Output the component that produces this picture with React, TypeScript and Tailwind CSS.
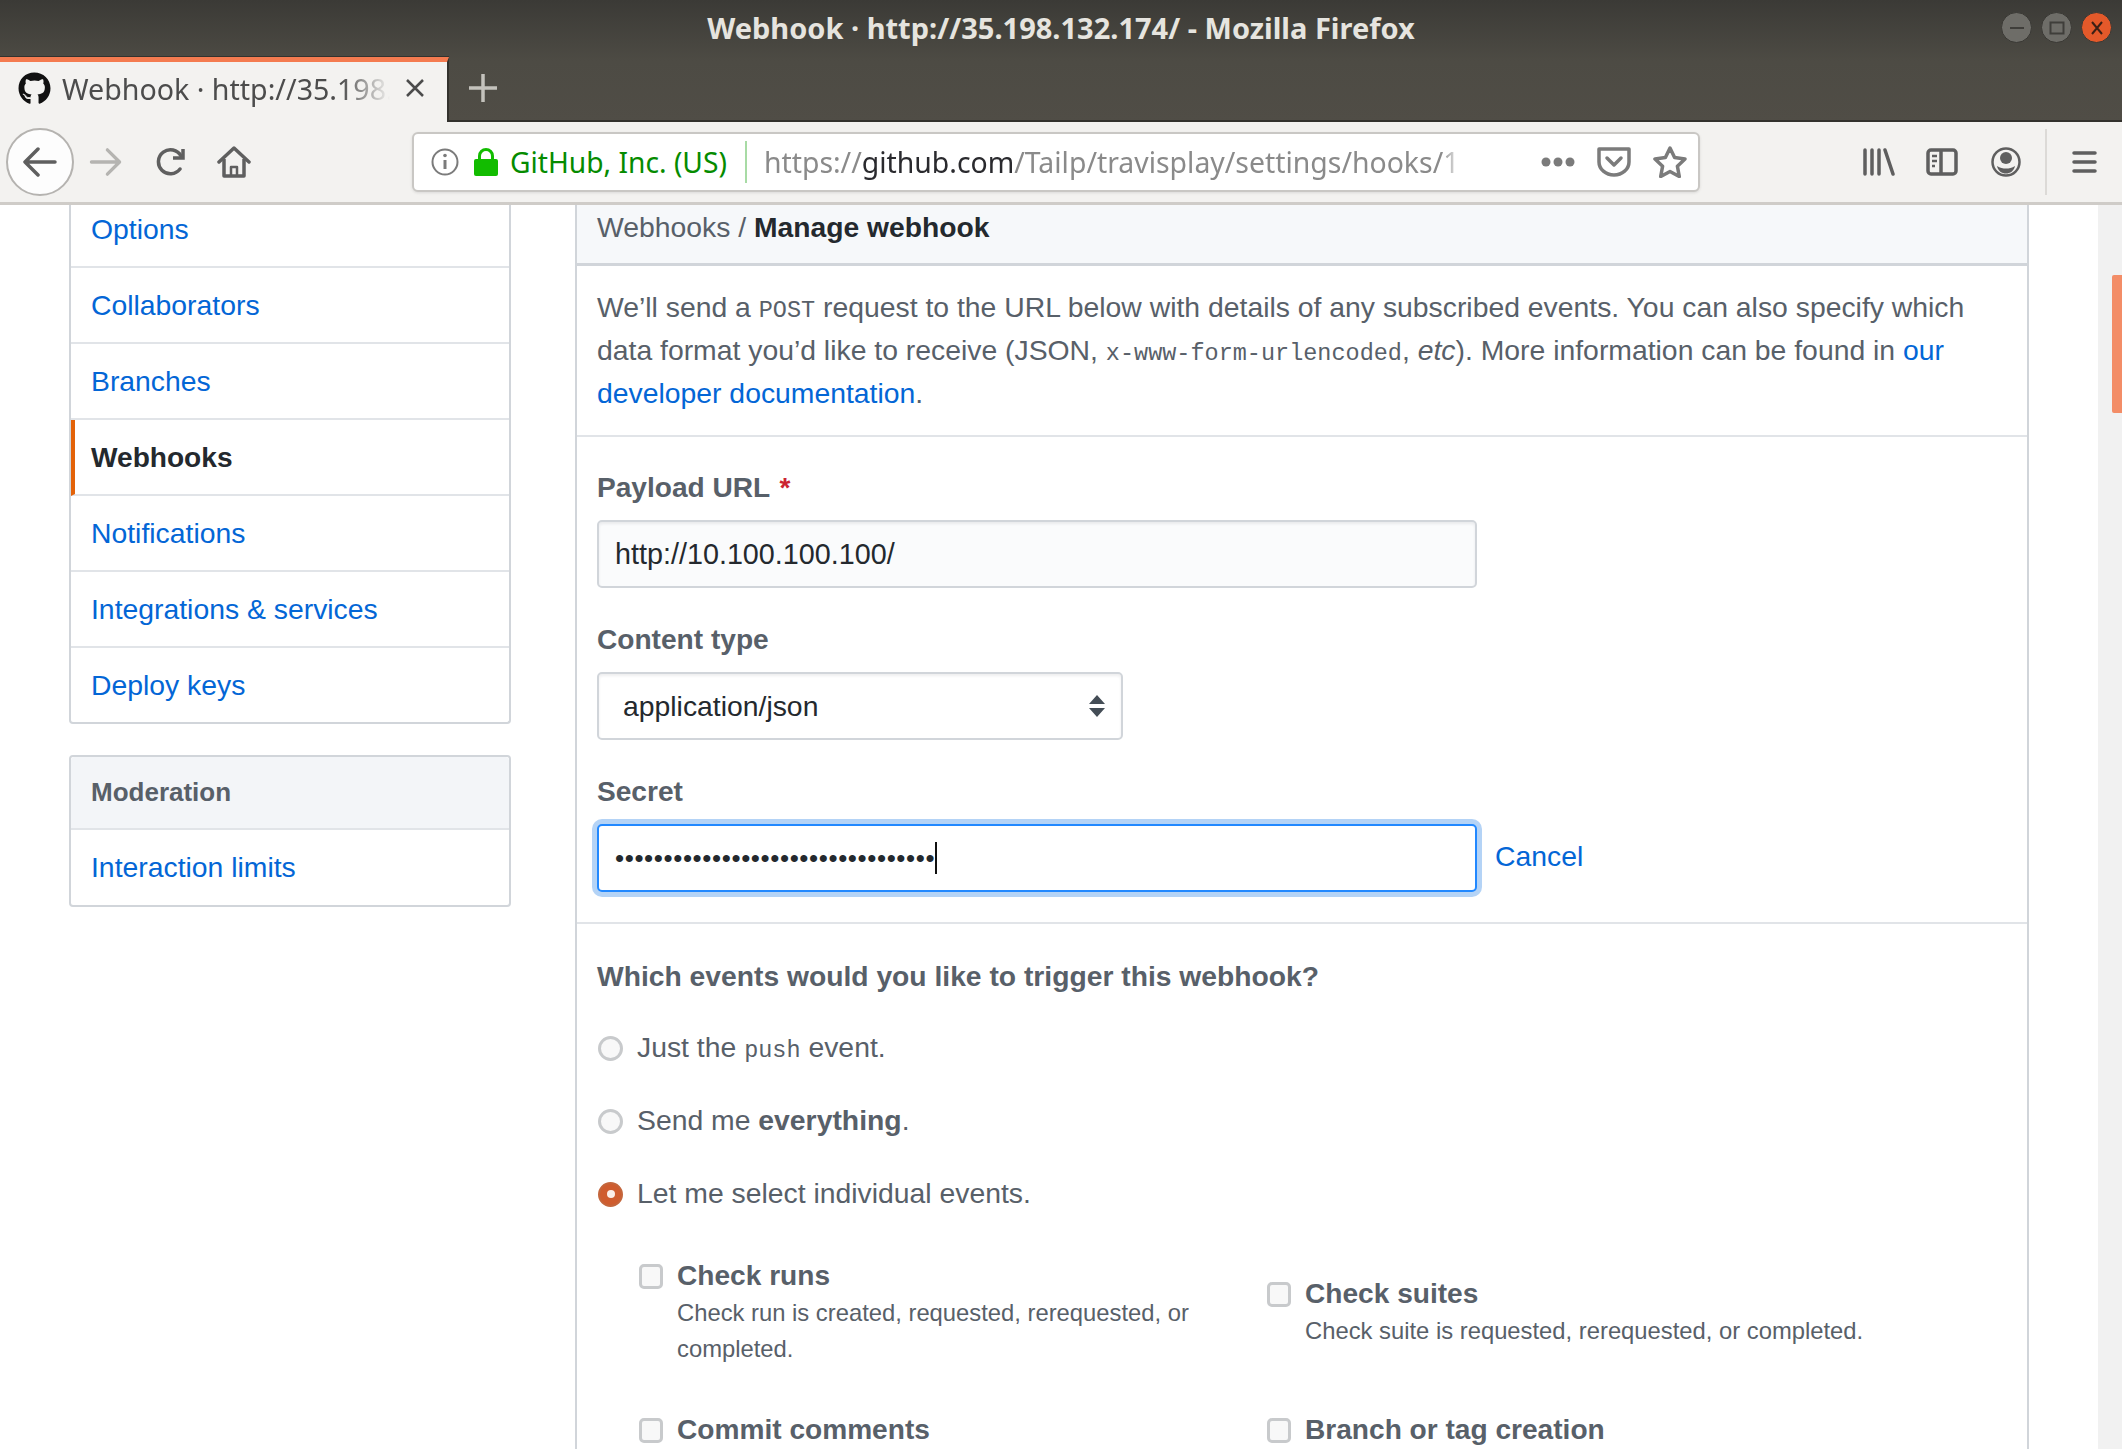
import { FaGithub } from 'react-icons/fa';

const sans = "font-['Liberation_Sans',Arial,sans-serif]";
const ubuntu = "font-['Noto_Sans','Open_Sans',sans-serif]";
const mono = "font-['Liberation_Mono',monospace] text-[23.5px] leading-none";

const menuItems = ['Collaborators', 'Branches', 'Webhooks', 'Notifications', 'Integrations & services', 'Deploy keys'];

function WindowButton({ kind }: { kind: 'min' | 'max' | 'close' }) {
  const bg = kind === 'close' ? 'bg-[#e4592a]' : 'bg-[#6e6d68]';
  return (
    <span className={`flex h-[31px] w-[31px] items-center justify-center rounded-full border border-[#3a3935] ${bg}`}>
      <svg width="16" height="16" viewBox="0 0 16 16" fill="none" stroke={kind === 'close' ? '#3c2015' : '#3f3e3a'} strokeWidth="2">
        {kind === 'min' && <path d="M1 8h14" />}
        {kind === 'max' && <rect x="1.5" y="2.5" width="13" height="11" />}
        {kind === 'close' && <path d="M3 2l10 12M13 2L3 14" />}
      </svg>
    </span>
  );
}

function TabBar() {
  return (
    <div className="bg-[linear-gradient(#3b3a36,#4d4b44_50%,#504d46)]">
      <div className={`relative flex h-[57px] items-center justify-center pb-[2px] ${ubuntu} text-[29px] font-bold text-[#e6e4df]`}>
        <span className="whitespace-nowrap text-center">Webhook · http://35.198.132.174/ - Mozilla Firefox</span>
        <div className="absolute right-[10px] top-[12px] flex gap-[9px]">
          <WindowButton kind="min" />
          <WindowButton kind="max" />
          <WindowButton kind="close" />
        </div>
      </div>
      <div className="flex h-[65px] items-stretch border-b-2 border-[#33322e]">
        <div className="-mb-[2px] flex w-[449px] items-center border-r-2 border-t-[5px] border-r-[#33322e] border-t-[#f47b50] bg-[#f3f2f0] pb-[8px] pl-[18px] shadow-[0_-1px_0_#33322e]">
          <FaGithub className="h-[33px] w-[33px] text-[#111]" />
          <span className={`ml-[11px] w-[328px] overflow-hidden whitespace-nowrap ${ubuntu} text-[28.6px] text-[#4c4c4c] [mask-image:linear-gradient(90deg,#000_85%,transparent)]`}>
            Webhook · http://35.198.132.174/
          </span>
          <svg className="ml-[15px]" width="20" height="20" viewBox="0 0 20 20" stroke="#4c4c4c" strokeWidth="2.5" fill="none">
            <path d="M2 2l16 16M18 2L2 18" />
          </svg>
        </div>
        <svg className="ml-[20px] mt-[16px]" width="28" height="30" viewBox="0 0 28 30" stroke="#c4c2bc" strokeWidth="3.5" fill="none">
          <path d="M14 1v28M0 15h28" />
        </svg>
      </div>
    </div>
  );
}

function Toolbar() {
  return (
    <div className="flex h-[83px] items-center border-b-[3px] border-[#cfccc8] bg-[#f3f2f0] pl-[6px]">
      <span className="flex h-[68px] w-[68px] items-center justify-center rounded-full border-2 border-[#b5b3b0] bg-[#fdfdfd]">
        <svg width="34" height="32" viewBox="0 0 34 32" fill="none" stroke="#5f5f5f" strokeWidth="3.5" strokeLinecap="round" strokeLinejoin="round">
          <path d="M32 16H3M15 3L2 16l13 13" />
        </svg>
      </span>
      <svg className="ml-[15px]" width="33" height="30" viewBox="0 0 34 32" fill="none" stroke="#b5b4b1" strokeWidth="3.5" strokeLinecap="round" strokeLinejoin="round">
        <path d="M2 16h29M19 3l13 13-13 13" />
      </svg>
      <svg className="ml-[33px]" width="32" height="30" viewBox="0 0 32 30" fill="none" stroke="#5f5f5f" strokeWidth="3.5" strokeLinecap="round" strokeLinejoin="round">
        <path d="M25 22a12 12 0 1 1 1-13" />
        <path d="M28 2v9h-10" strokeLinecap="butt" strokeLinejoin="miter" />
      </svg>
      <svg className="ml-[30px]" width="34" height="32" viewBox="0 0 34 32" fill="none" stroke="#5f5f5f" strokeWidth="3.5" strokeLinejoin="round">
        <path d="M2 16L17 2l15 14" strokeLinecap="round" />
        <path d="M7 13v17h20V13" />
        <path d="M14 30v-9h6v9" strokeWidth="2.5" />
      </svg>
      <div className="ml-[161px] flex h-[60px] w-[1288px] items-center rounded-[6px] border-2 border-[#c9c7c4] bg-white shadow-[0_1px_3px_rgba(0,0,0,0.1)]">
        <svg className="ml-[17px]" width="28" height="28" viewBox="0 0 28 28" fill="none" stroke="#7b7b7b" strokeWidth="2">
          <circle cx="14" cy="14" r="12.5" />
          <path d="M14 12v9" strokeWidth="3" />
          <circle cx="14" cy="7.5" r="1.8" fill="#7b7b7b" stroke="none" />
        </svg>
        <svg className="ml-[15px]" width="24" height="28" viewBox="0 0 24 28">
          <path d="M5.5 12V8a6.5 6.5 0 0 1 13 0v4" fill="none" stroke="#12bc00" strokeWidth="3" />
          <rect x="0" y="11" width="24" height="17" rx="2" fill="#12bc00" />
        </svg>
        <span className={`ml-[12px] whitespace-nowrap ${ubuntu} text-[28.2px] text-[#058b00]`}>GitHub, Inc. (US)</span>
        <span className="ml-[18px] h-[42px] w-[2px] bg-[#a8dba5]" />
        <span className={`ml-[17px] w-[698px] overflow-hidden whitespace-nowrap ${ubuntu} text-[28.4px] text-[#8a8a8a] [mask-image:linear-gradient(90deg,#000_97%,transparent)]`}>
          https://<span className="text-[#2a2a2e]">github.com</span>/Tailp/travisplay/settings/hooks/11111
        </span>
        <svg className="ml-[79px]" width="34" height="10" viewBox="0 0 34 10" fill="#7b7b7b">
          <circle cx="5" cy="5" r="4.5" />
          <circle cx="17" cy="5" r="4.5" />
          <circle cx="29" cy="5" r="4.5" />
        </svg>
        <svg className="ml-[22px]" width="34" height="30" viewBox="0 0 34 30" fill="none" stroke="#7b7b7b" strokeWidth="3.5" strokeLinecap="round" strokeLinejoin="round">
          <path d="M2 2h30v13a15 13 0 0 1-30 0z" />
          <path d="M10 11l7 7 7-7" />
        </svg>
        <svg className="ml-[22px]" width="34" height="32" viewBox="0 0 34 32" fill="none" stroke="#7b7b7b" strokeWidth="3.5" strokeLinejoin="round">
          <path d="M17 2l4.6 9.6 10.4 1.4-7.6 7.2 1.9 10.3L17 25.5 7.700 30.500l1.900-10.300L2 13l10.400-1.400z" />
        </svg>
      </div>
      <svg className="ml-[163px]" width="32" height="28" viewBox="0 0 32 28" fill="none" stroke="#5f5f5f" strokeWidth="3.5" strokeLinecap="round">
        <path d="M2 2v24M9 2v24M16 2v24M22 2l8 24" />
      </svg>
      <svg className="ml-[31px]" width="32" height="28" viewBox="0 0 32 28" fill="none" stroke="#5f5f5f" strokeWidth="3.5" strokeLinejoin="round">
        <rect x="2" y="2" width="28" height="24" rx="3" />
        <path d="M15 2v24" />
        <path d="M6 8h5M6 13h5M6 18h3" strokeWidth="2.500" />
      </svg>
      <svg className="ml-[33px]" width="30" height="30" viewBox="0 0 30 30">
        <circle cx="15" cy="15" r="13.500" fill="none" stroke="#5f5f5f" strokeWidth="2.500" />
        <circle cx="15" cy="11" r="6" fill="#5f5f5f" />
        <path d="M6 19c3 2 6 2.500 9 2.500s6-.5 9-2.500c-1 5-5 7.500-9 7.500s-8-2.500-9-7.500z" fill="#5f5f5f" />
      </svg>
      <span className="ml-[24px] h-[66px] w-[2px] bg-[#dcdad7]" />
      <svg className="ml-[25px]" width="25" height="24" viewBox="0 0 25 24" fill="none" stroke="#5f5f5f" strokeWidth="3.500" strokeLinecap="round">
        <path d="M2 3h21M2 12h21M2 21h21" />
      </svg>
    </div>
  );
}

function Sidebar() {
  return (
    <aside className="ml-[69px] w-[442px] shrink-0">
      <div className="rounded-b-[4px] border-x-2 border-b-2 border-[#d1d5da]">
        <a className="flex h-[63px] items-start border-b-2 border-[#e1e4e8] pl-[20px] pt-[3px] text-[#0366d6]">Options</a>
        {menuItems.map((item, idx) => (
          <a
            key={item}
            className={`flex items-center ${idx < menuItems.length - 1 ? 'h-[76px] border-b-2 border-[#e1e4e8]' : 'h-[74px]'} ${
              item === 'Webhooks' ? 'border-l-[4px] border-l-[#e36209] pl-[16px] text-[28.1px] font-bold text-[#24292e]' : 'pl-[20px] text-[#0366d6]'
            }`}
          >
            {item}
          </a>
        ))}
      </div>
      <div className="mt-[31px] rounded-[4px] border-2 border-[#d1d5da]">
        <h3 className="flex h-[73px] items-center rounded-t-[4px] border-b-2 border-[#e1e4e8] bg-[#f3f5f8] pl-[20px] text-[26px] font-bold text-[#586069]">
          Moderation
        </h3>
        <a className="flex h-[75px] items-center pl-[20px] text-[#0366d6]">Interaction limits</a>
      </div>
    </aside>
  );
}

function Label({ children }: { children: React.ReactNode }) {
  return <label className="block text-[28.1px] font-bold text-[#586069]">{children}</label>;
}

function Radio({ checked, children }: { checked?: boolean; children: React.ReactNode }) {
  return (
    <div className="ml-[1px] flex h-[42px] items-center gap-[14px] text-[#586069]">
      {checked ? (
        <span className="mt-[2px] flex h-[25px] w-[25px] items-center justify-center rounded-full border-2 border-[#c4663c] bg-[#cf5c2e]">
          <span className="h-[8px] w-[8px] rounded-full bg-[#fbeee8]" />
        </span>
      ) : (
        <span className="mt-[2px] h-[25px] w-[25px] rounded-full border-[3px] border-[#c8cacc] bg-[#f8f8f8]" />
      )}
      <span>{children}</span>
    </div>
  );
}

function EventCheck({ title, desc, narrow }: { title: string; desc?: string; narrow?: boolean }) {
  return (
    <div className={`flex w-[628px] items-start gap-[14px] ${narrow ? 'pr-[40px]' : ''}`}>
      <span className="mt-[10px] h-[25px] w-[24px] shrink-0 rounded-[5px] border-[3px] border-[#c8cacc] bg-[#f8f8f8]" />
      <div>
        <div className="text-[28.1px] font-bold text-[#586069]">{title}</div>
        {desc && <p className="-mt-[2px] text-[23.8px] leading-[36px] text-[#586069]">{desc}</p>}
      </div>
    </div>
  );
}

function WebhookForm() {
  return (
    <main className="ml-[64px] w-[1454px] shrink-0 border-x-2 border-[#d1d5da]">
      <div className="flex h-[61px] items-start border-b-[3px] border-[#d1d5da] bg-[#f6f8fa] pl-[20px] pt-[1px] text-[#586069]">
        Webhooks /&nbsp;<strong className="text-[28.25px] font-bold text-[#24292e]">Manage webhook</strong>
      </div>
      <div className="border-b-2 border-[#e1e4e8] px-[20px] pb-[20px] pt-[20px] text-[#586069]">
        We’ll send a <code className={mono}>POST</code> request to the URL below with details of any subscribed events. You can also specify which
        data format you’d like to receive (JSON, <code className={mono}>x-www-form-urlencoded</code>, <em>etc</em>). More information can be found in{' '}
        <a className="text-[#0366d6]">our developer documentation</a>.
      </div>
      <div className="border-b-2 border-[#e1e4e8] px-[20px] pb-[30px] pt-[29px]">
        <Label>
          Payload URL <span className="ml-[2px] text-[#cb2431]">*</span>
        </Label>
        <div className="mt-[11px] flex h-[68px] w-[880px] items-center rounded-[5px] border-2 border-[#d1d5da] bg-[#fafbfc] pl-[16px] text-[28.75px] text-[#24292e] shadow-[inset_0_2px_3px_rgba(27,31,35,0.075)]">
          http://10.100.100.100/
        </div>
        <div className="mt-[30px]">
          <Label>Content type</Label>
        </div>
        <div className="mt-[11px] flex h-[68px] w-[526px] items-center justify-between rounded-[5px] border-2 border-[#d1d5da] bg-white pl-[24px] pr-[16px] text-[#24292e] shadow-[inset_0_2px_3px_rgba(27,31,35,0.075)]">
          application/json
          <svg width="16" height="22" viewBox="0 0 16 22" fill="#444d56">
            <path d="M8 0l8 9H0zM8 22L0 13h16z" />
          </svg>
        </div>
        <div className="mt-[30px]">
          <Label>Secret</Label>
        </div>
        <div className="mt-[11px] flex items-center gap-[18px]">
          <div className="flex h-[68px] w-[880px] items-center rounded-[5px] border-2 border-[#2188ff] bg-white pl-[16px] shadow-[0_0_0_5px_#b4d3f6]">
            <span className="whitespace-nowrap text-[26px] tracking-[0.6px] text-[#24292e]">•••••••••••••••••••••••••••••••••</span>
            <span className="h-[32px] w-[2px] bg-[#111]" />
          </div>
          <a className="-mt-[3px] text-[#0366d6]">Cancel</a>
        </div>
      </div>
      <div className="px-[20px] pt-[31px]">
        <div className="text-[28.25px] font-bold text-[#586069]">Which events would you like to trigger this webhook?</div>
        <div className="mt-[28px] flex flex-col gap-[31px]">
          <Radio>
            Just the <code className={mono}>push</code> event.
          </Radio>
          <Radio>
            Send me <strong className="font-bold">everything</strong>.
          </Radio>
          <Radio checked>Let me select individual events.</Radio>
        </div>
        <div className="ml-[42px] mt-[40px] flex flex-col gap-[41px]">
          <div className="flex items-center">
            <EventCheck narrow title="Check runs" desc="Check run is created, requested, rerequested, or completed." />
            <EventCheck title="Check suites" desc="Check suite is requested, rerequested, or completed." />
          </div>
          <div className="flex items-center">
            <EventCheck narrow title="Commit comments" desc="Commit or diff commented on." />
            <EventCheck title="Branch or tag creation" desc="Branch or tag created." />
          </div>
        </div>
      </div>
    </main>
  );
}

export default function App() {
  return (
    <div className={`flex h-screen w-full flex-col overflow-hidden bg-white ${sans} text-[28.35px] leading-[43px]`}>
      <TabBar />
      <Toolbar />
      <div className="flex min-h-0 flex-1 overflow-hidden">
        <Sidebar />
        <WebhookForm />
        <div className="ml-auto w-[24px] shrink-0 bg-[#f1f1f1] pl-[14px] pt-[70px]">
          <div className="h-[138px] w-[10px] rounded-l-[2px] bg-[#f38d67]" />
        </div>
      </div>
    </div>
  );
}
